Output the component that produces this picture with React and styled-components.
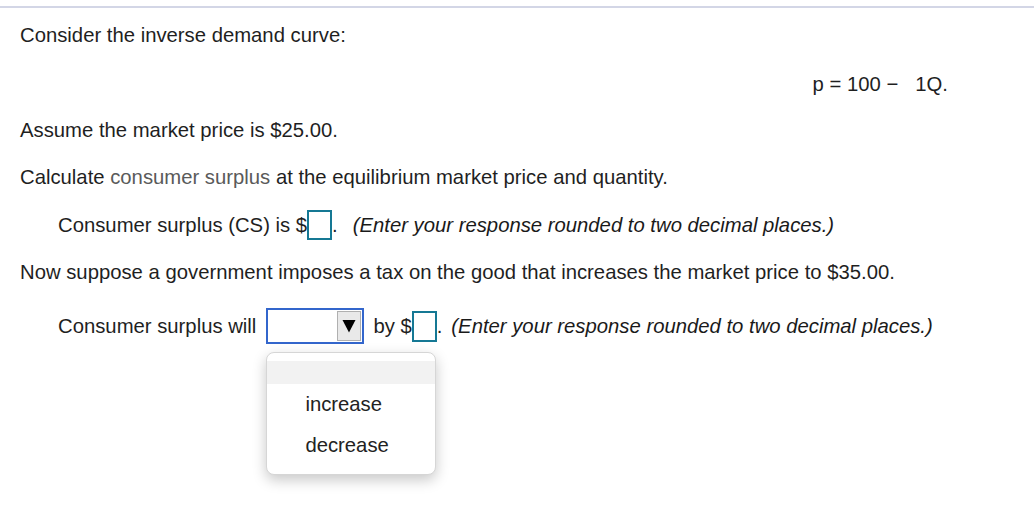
import styled, { createGlobalStyle } from "styled-components";

const GlobalStyle = createGlobalStyle`
  html, body {
    margin: 0;
    padding: 0;
    background: #ffffff;
  }
  body {
    font-family: "Liberation Sans", Arial, sans-serif;
    font-size: 20.3px;
    color: #1f1f1f;
  }
`;

const Page = styled.div`
  width: 1034px;
  height: 513px;
  box-sizing: border-box;
  padding-top: 6px;
  position: relative;
`;

const TopRule = styled.div`
  height: 2px;
  background-color: #d3d6e6;
`;

const Content = styled.div`
  padding: 15px 20px 0;
`;

const Para = styled.p`
  margin: 0;
  margin-top: ${(p) => p.$gap || 0}px;
  line-height: 24px;
  white-space: pre;
`;

const Equation = styled(Para)`
  text-align: right;
  padding-right: 66px;
`;

const Term = styled.span`
  margin-left: 17px;
`;

const Glossary = styled.span`
  color: #5a5a5a;
`;

const Row = styled.div`
  display: flex;
  align-items: center;
  margin-top: ${(p) => p.$gap || 0}px;
  padding-left: ${(p) => p.$indent || 0}px;
  line-height: 24px;
  white-space: pre;
  position: relative;
`;

const AnswerBox = styled.span`
  display: inline-block;
  width: 25px;
  height: ${(p) => p.$h || 30}px;
  box-sizing: border-box;
  border: 2px solid #157894;
  background: #ffffff;
`;

const Hint = styled.span`
  font-style: italic;
  color: #1a1a1a;
  margin-left: ${(p) => p.$lead || 0}px;
`;

const SelectWrap = styled.div`
  position: relative;
  margin: 0 9px 0 10px;
`;

const Select = styled.div`
  width: 98px;
  height: 36px;
  box-sizing: border-box;
  border: 2px solid #3366cc;
  background: #ffffff;
  display: flex;
  justify-content: flex-end;
  align-items: stretch;
  padding: 1px;
`;

const ArrowButton = styled.div`
  width: 24px;
  box-sizing: border-box;
  border: 1px solid #b0b0b0;
  background: #e9e9e9;
  display: flex;
  align-items: center;
  justify-content: center;
`;

const Menu = styled.div`
  position: absolute;
  left: 0;
  top: 44px;
  width: 170px;
  box-sizing: border-box;
  padding: 8px 0;
  background: #ffffff;
  border: 1px solid #d6d6d6;
  border-radius: 8px;
  box-shadow: 0 5px 14px rgba(0, 0, 0, 0.22);
  z-index: 2;
`;

const MenuItem = styled.div`
  height: ${(p) => (p.$blank ? 23 : 41)}px;
  line-height: ${(p) => (p.$blank ? 23 : 41)}px;
  padding-left: 38px;
  background: ${(p) => (p.$blank ? "#f2f2f2" : "transparent")};
  color: #222222;
`;

export default function App() {
  return (
    <Page>
      <GlobalStyle />
      <TopRule />
      <Content>
        <Para>Consider the inverse demand curve:</Para>
        <Equation $gap={25}>
          p = 100 −<Term>1Q.</Term>
        </Equation>
        <Para $gap={22}>Assume the market price is $25.00.</Para>
        <Para $gap={23}>
          Calculate <Glossary>consumer surplus</Glossary> at the equilibrium
          market price and quantity.
        </Para>
        <Row $gap={21} $indent={38}>
          Consumer surplus (CS) is $<AnswerBox />.
          <Hint $lead={15}>
            (Enter your response rounded to two decimal places.)
          </Hint>
        </Row>
        <Para $gap={20}>
          Now suppose a government imposes a tax on the good that increases
          the market price to $35.00.
        </Para>
        <Row $gap={24} $indent={38}>
          Consumer surplus will
          <SelectWrap>
            <Select>
              <ArrowButton>
                <svg width="14" height="14" viewBox="0 0 14 14">
                  <path d="M0.5 1 L13.5 1 L7 13.5 Z" fill="#000000" />
                </svg>
              </ArrowButton>
            </Select>
            <Menu>
              <MenuItem $blank />
              <MenuItem>increase</MenuItem>
              <MenuItem>decrease</MenuItem>
            </Menu>
          </SelectWrap>
          by $<AnswerBox $h={31} />.
          <Hint $lead={9}>
            (Enter your response rounded to two decimal places.)
          </Hint>
        </Row>
      </Content>
    </Page>
  );
}
